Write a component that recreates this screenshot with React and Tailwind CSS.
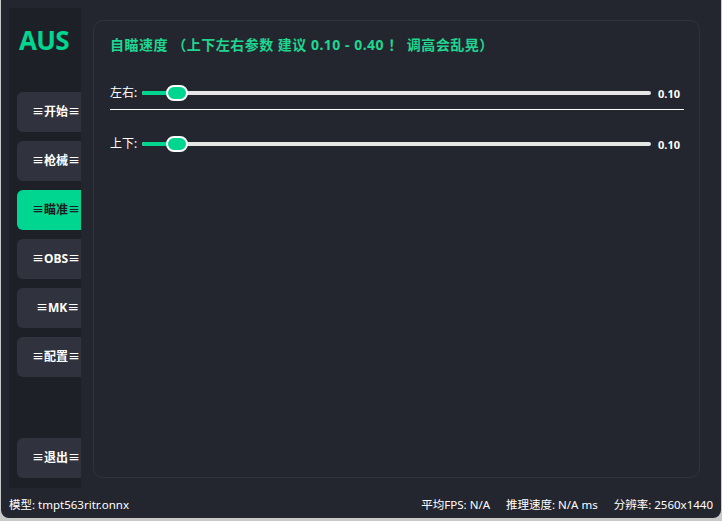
import React, { useState } from 'react';

const navItems = ['≡开始≡', '≡枪械≡', '≡瞄准≡', '≡OBS≡', '≡MK≡', '≡配置≡'];

const font = { fontFamily: '"Noto Sans", "Noto Sans CJK SC", sans-serif' };

function SliderRow({ label, value, onChange }) {
  const min = 0.1;
  const max = 1;
  const pct = ((value - min) / (max - min)) * 100;
  return (
    <div className="flex items-center h-[20px]">
      <span className="text-[12px] text-white w-[32px] leading-none">{label}</span>
      <div className="relative flex-1 h-[20px] flex items-center">
        <div className="absolute left-0 right-0 h-[4px] rounded-full bg-[#e6e6e6]" />
        <div className="absolute left-0 h-[4px] rounded-full bg-[#00d68f]" style={{ width: `calc(${pct}% + 35px)` }} />
        <div
          className="absolute w-[22px] h-[16px] rounded-full bg-[#00d68f] border-2 border-white"
          style={{ left: `calc(${pct}% * 0.95 + 24px)` }}
        />
        <input
          type="range"
          min={min}
          max={max}
          step={0.01}
          value={value}
          onChange={(e) => onChange(parseFloat(e.target.value))}
          className="absolute inset-0 opacity-0 w-full"
        />
      </div>
      <span className="w-[33px] pr-[4px] text-right text-[11px] font-bold text-white leading-none">{value.toFixed(2)}</span>
    </div>
  );
}

export default function App() {
  const [active, setActive] = useState(2);
  const [lr, setLr] = useState(0.1);
  const [ud, setUd] = useState(0.1);

  return (
    <div className="w-[722px] h-[521px] bg-[#c9c9c9] flex" style={font}>
      <div className="w-[720px] h-[518px] ml-[1px] bg-[#24262f] rounded-b-[8px] flex flex-col">
        <div className="flex flex-1 min-h-0 pt-[8px] pl-[8px] pr-[21px]">
          {/* Sidebar */}
          <div className="w-[73px] h-[480px] bg-[#1e2028] overflow-hidden flex flex-col pl-[8px]">
            <div className="h-[84px] flex items-start pl-[2px] pt-[19px]">
              <span className="text-[26px] font-bold text-[#00d68f] tracking-tight leading-none">AUS</span>
            </div>
            <div className="flex flex-col gap-[9px]">
              {navItems.map((item, i) => (
                <button
                  key={item}
                  onClick={() => setActive(i)}
                  className={`w-[72px] h-[40px] rounded-[6px] text-[12px] font-bold text-left pl-[15px] ${
                    active === i ? 'bg-[#00d68f] text-[#1a1c22]' : 'bg-[#30333e] text-white'
                  } ${item === '≡MK≡' ? 'pl-[19px]' : ''}`}
                >
                  {item}
                </button>
              ))}
            </div>
            <div className="flex-1" />
            <button className="w-[72px] h-[40px] rounded-[6px] bg-[#30333e] text-white text-[12px] font-bold text-left pl-[15px] mb-[10px]">
              ≡退出≡
            </button>
          </div>

          {/* Main panel */}
          <div className="ml-[12px] mt-[12px] w-[607px] h-[458px] rounded-[10px] border border-[#30333f] px-[16px] pt-[13px]">
            <h1 className="text-[14px] font-bold text-[#1ed690] leading-[22px] tracking-[0.5px]">
              自瞄速度 （上下左右参数 建议 0.10 - 0.40 ！ 调高会乱晃）
            </h1>
            <div className="mt-[27px] w-[574px]">
              <SliderRow label="左右:" value={lr} onChange={setLr} />
              <div className="h-px bg-white mt-[6px] mb-[24px]" />
              <SliderRow label="上下:" value={ud} onChange={setUd} />
            </div>
          </div>
        </div>

        {/* Status bar */}
        <div className="h-[30px] flex items-center justify-between pl-[8px] pr-[8px] pt-[3px] text-[11.5px] text-white">
          <span>模型: tmpt563ritr.onnx</span>
          <div className="flex gap-[16px]">
            <span>平均FPS: N/A</span>
            <span>推理速度: N/A ms</span>
            <span>分辨率: 2560x1440</span>
          </div>
        </div>
      </div>
    </div>
  );
}
